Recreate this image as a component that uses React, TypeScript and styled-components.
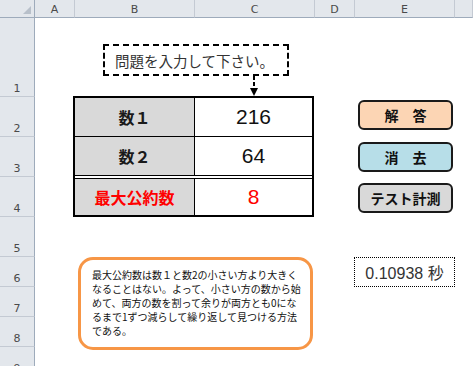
import React from "react";
import styled, { createGlobalStyle } from "styled-components";

const Global = createGlobalStyle`
  html, body { margin: 0; padding: 0; background: #fff; }
  body { font-family: "Noto Sans CJK JP", "Liberation Sans", sans-serif; }
`;

const JP = `"Liberation Sans", "Noto Sans CJK JP", sans-serif`;

const Sheet = styled.div`
  position: relative;
  display: grid;
  grid-template-columns: 35px 40px 120px 120px 40px 100px 18px;
  grid-template-rows: 18px 79px 40px 40px 40px 40px 30px 30px 30px 30px;
  width: 473px;
  height: 366px;
  overflow: hidden;
  background: #fff;
`;

const Corner = styled.div`
  grid-column: 1;
  grid-row: 1;
  position: relative;
  background: #e3e7ec;
  border-right: 1px solid #9eabbb;
  border-bottom: 1px solid #9eabbb;
  box-sizing: border-box;
  &::after {
    content: "";
    position: absolute;
    right: 3px;
    bottom: 3px;
    width: 0;
    height: 0;
    border-left: 8px solid transparent;
    border-bottom: 8px solid #b8c0ca;
  }
`;

const ColHead = styled.div<{ $col: number }>`
  grid-column: ${(p) => p.$col};
  grid-row: 1;
  display: flex;
  align-items: center;
  justify-content: center;
  background: #e3e7ec;
  border-right: 1px solid #c4cad3;
  border-bottom: 1px solid #9eabbb;
  box-sizing: border-box;
  font-family: "DejaVu Sans", "Noto Sans", sans-serif;
  font-size: 11px;
  color: #4a4a4a;
  padding-top: 1px;
`;

const RowHead = styled.div<{ $row: number }>`
  grid-column: 1;
  grid-row: ${(p) => p.$row};
  display: flex;
  align-items: flex-end;
  justify-content: center;
  background: #e3e7ec;
  border-right: 1px solid #9eabbb;
  border-bottom: 1px solid #c4cad3;
  box-sizing: border-box;
  font-family: "DejaVu Sans", "Noto Sans", sans-serif;
  font-size: 11px;
  color: #4a4a4a;
  padding-bottom: 1px;
`;

const Table = styled.div`
  grid-column: 3 / 5;
  grid-row: 3 / 6;
  margin: -1px 1px 0 -2px;
  border: 2px solid #000;
  display: grid;
  grid-template-rows: 39px 42px 36px;
  background: #fff;
`;

const TRow = styled.div<{ $double?: boolean; $last?: boolean }>`
  display: grid;
  grid-template-columns: 120px 1fr;
  box-sizing: border-box;
  border-bottom: ${(p) => (p.$last ? "none" : p.$double ? "4px double #000" : "1px solid #000")};
`;

const Label = styled.div<{ $red?: boolean }>`
  background: #d9d9d9;
  border-right: 1px solid #000;
  display: flex;
  align-items: center;
  justify-content: center;
  font-family: ${JP};
  font-weight: bold;
  font-size: 16px;
  color: ${(p) => (p.$red ? "#ff0000" : "#1a1a1a")};
`;

const Value = styled.div<{ $red?: boolean }>`
  display: flex;
  align-items: center;
  justify-content: center;
  font-family: ${JP};
  font-size: 21px;
  color: ${(p) => (p.$red ? "#ff0000" : "#111")};
`;

const Callout = styled.div`
  position: absolute;
  left: 103px;
  top: 44px;
  width: 186px;
  height: 32px;
  box-sizing: border-box;
  border: 2px dashed #000;
  background: #fff;
  display: flex;
  align-items: center;
  padding-left: 10px;
  font-family: "Noto Sans CJK JP", sans-serif;
  font-size: 14.5px;
  color: #333;
  white-space: nowrap;
`;

const Arrow = styled.svg`
  position: absolute;
  left: 249px;
  top: 76px;
`;

const Button = styled.div<{ $bg: string; $top: number }>`
  position: absolute;
  left: 358px;
  top: ${(p) => p.$top}px;
  width: 95px;
  height: 30px;
  box-sizing: border-box;
  border: 2px solid #1a1a1a;
  border-radius: 6px;
  background: ${(p) => p.$bg};
  display: flex;
  align-items: center;
  justify-content: center;
  font-family: "Noto Sans CJK JP", sans-serif;
  font-weight: bold;
  font-size: 14px;
  color: #111;
  white-space: pre;
`;

const TimeBox = styled.div`
  position: absolute;
  left: 354px;
  top: 257px;
  width: 101px;
  height: 30px;
  box-sizing: border-box;
  border: 1px dotted #000;
  display: flex;
  align-items: center;
  justify-content: center;
  font-family: ${JP};
  font-size: 16px;
  color: #333;
  white-space: pre;
`;

const Note = styled.div`
  position: absolute;
  left: 78px;
  top: 257px;
  width: 235px;
  height: 93px;
  box-sizing: border-box;
  border: 3px solid #f79646;
  border-radius: 15px;
  background: #fff;
  padding: 8px 0 0 11px;
  font-family: "Noto Sans CJK JP", sans-serif;
  font-size: 10px;
  line-height: 14px;
  color: #111;
`;

const NoteLine = styled.div`
  white-space: nowrap;
`;

const cols = ["A", "B", "C", "D", "E", ""];
const rows = [1, 2, 3, 4, 5, 6, 7, 8, 9];

const noteLines = [
  "最大公約数は数１と数2の小さい方より大きく",
  "なることはない。よって、小さい方の数から始",
  "めて、両方の数を割って余りが両方とも0にな",
  "るまで1ずつ減らして繰り返して見つける方法",
  "である。",
];

export default function App() {
  return (
    <>
      <Global />
      <Sheet>
        <Corner />
        {cols.map((c, i) => (
          <ColHead key={i} $col={i + 2}>
            {c}
          </ColHead>
        ))}
        {rows.map((r) => (
          <RowHead key={r} $row={r + 1}>
            {r}
          </RowHead>
        ))}
        <Table>
          <TRow>
            <Label>数１</Label>
            <Value>216</Value>
          </TRow>
          <TRow $double>
            <Label>数２</Label>
            <Value>64</Value>
          </TRow>
          <TRow $last>
            <Label $red>最大公約数</Label>
            <Value $red>8</Value>
          </TRow>
        </Table>

        <Callout>問題を入力して下さい。</Callout>
        <Arrow width="10" height="21" viewBox="0 0 10 21">
          <line x1="5" y1="0" x2="5" y2="13" stroke="#000" strokeWidth="2" strokeDasharray="4 2" />
          <polygon points="1,12 9,12 5,20" fill="#000" />
        </Arrow>

        <Button $bg="#fcd5b4" $top={100}>解　答</Button>
        <Button $bg="#b7dee8" $top={142}>消　去</Button>
        <Button $bg="#d9d9d9" $top={183}>テスト計測</Button>

        <TimeBox>0.10938 秒</TimeBox>

        <Note>
          {noteLines.map((l, i) => (
            <NoteLine key={i}>{l}</NoteLine>
          ))}
        </Note>
      </Sheet>
    </>
  );
}
